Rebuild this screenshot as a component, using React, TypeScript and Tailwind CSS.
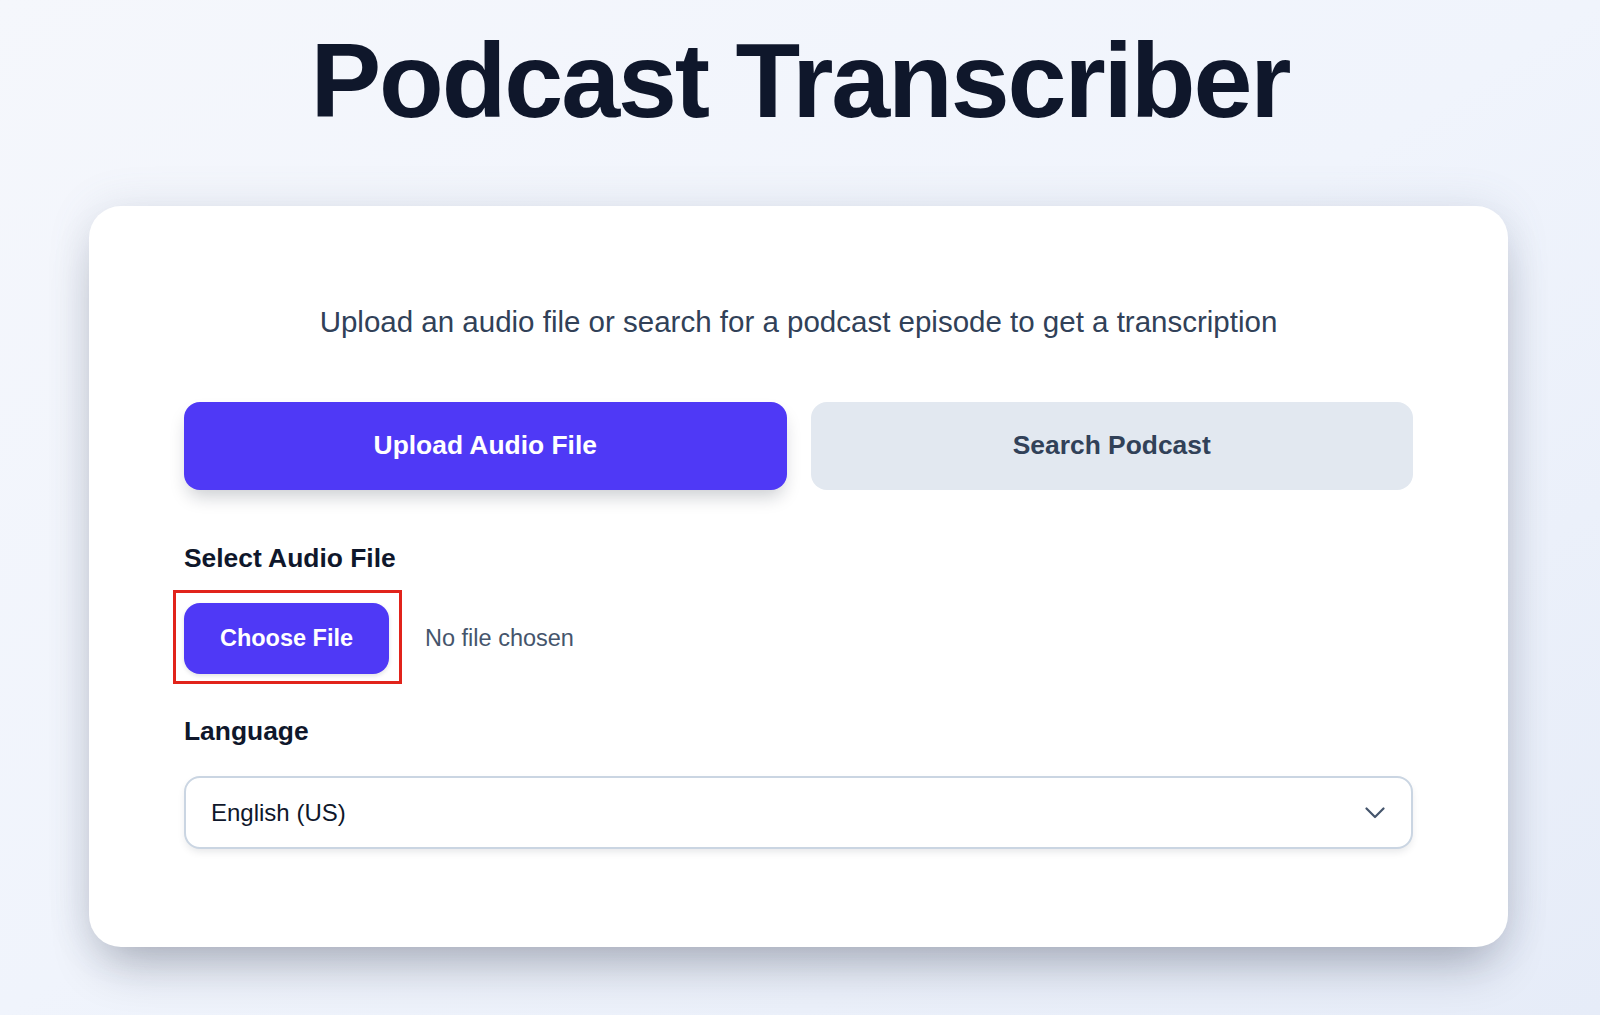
import { useState } from "react";

type Mode = "upload" | "search";

function Chevron() {
  return (
    <svg width="20" height="12" viewBox="0 0 20 12" fill="none" className="shrink-0">
      <polyline
        points="1.5,1.5 10,10 18.5,1.5"
        stroke="#45556c"
        strokeWidth="2.2"
        strokeLinecap="round"
        strokeLinejoin="round"
      />
    </svg>
  );
}

export default function App() {
  const [mode, setMode] = useState<Mode>("upload");

  const tabClass = (active: boolean) =>
    active
      ? "h-[88px] rounded-2xl bg-[#4f39f6] text-[26.4px] font-bold text-white shadow-[0_10px_18px_-4px_rgba(15,23,42,0.22)]"
      : "h-[88px] rounded-2xl bg-[#e2e8f0] text-[26.4px] font-bold text-[#314158]";

  return (
    <div className="min-h-screen bg-gradient-to-br from-[#f5f7fc] via-[#f0f4fc] to-[#e6ecf8] pt-[27px] font-['Liberation_Sans',Arial,sans-serif]">
      <h1 className="text-center text-[106px] font-bold leading-none tracking-[-0.02em] text-[#0f172b]">
        Podcast Transcriber
      </h1>

      {/* Main card */}
      <div className="ml-[89px] mt-[73px] w-[1419px] rounded-[32px] bg-white px-[95px] pt-[96px] pb-[98px] shadow-[0_28px_50px_-14px_rgba(15,23,42,0.3),0_0_44px_rgba(100,116,139,0.14)]">
        <p className="text-center text-[29.5px] leading-[40px] text-[#314158]">
          Upload an audio file or search for a podcast episode to get a transcription
        </p>

        {/* Mode switch */}
        <div className="mt-[60px] grid grid-cols-2 gap-6">
          <button className={tabClass(mode === "upload")} onClick={() => setMode("upload")}>
            Upload Audio File
          </button>
          <button className={tabClass(mode === "search")} onClick={() => setMode("search")}>
            Search Podcast
          </button>
        </div>

        {/* File picker */}
        <div className="mt-[50px]">
          <label className="block text-[26.4px] font-bold leading-[36px] text-[#0f172b]">
            Select Audio File
          </label>
          <div className="mt-[27px] flex items-center gap-[36px]">
            <div className="relative">
              <button className="h-[71px] w-[205px] rounded-2xl bg-[#4f39f6] text-[23.5px] font-bold text-white shadow-[0_2px_4px_rgba(15,23,42,0.12)]">
                Choose File
              </button>
              <span className="pointer-events-none absolute -left-[11px] -top-[13px] h-[94px] w-[229px] border-[3px] border-[#e1231b]" />
            </div>
            <span className="text-[23.5px] text-[#45556c]">No file chosen</span>
          </div>
        </div>

        {/* Language */}
        <div className="mt-[39px]">
          <label className="block text-[26.4px] font-bold leading-[36px] text-[#0f172b]">
            Language
          </label>
          <div className="mt-[27px] flex h-[73px] items-center justify-between rounded-2xl border-2 border-[#cad5e2] bg-white pl-[25px] pr-[26px] shadow-[0_4px_8px_-2px_rgba(15,23,42,0.12)]">
            <span className="text-[24px] text-[#0f172b]">English (US)</span>
            <Chevron />
          </div>
        </div>
      </div>
    </div>
  );
}
